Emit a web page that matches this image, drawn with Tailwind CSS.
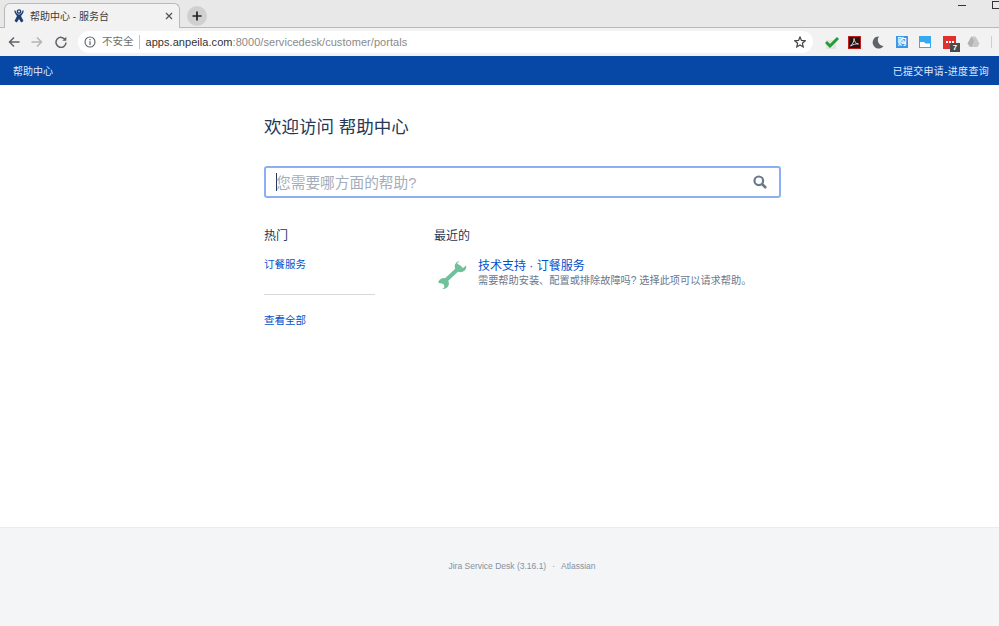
<!DOCTYPE html>
<html lang="zh-CN">
<head>
    <meta charset="UTF-8">
    <title>帮助中心 - 服务台</title>
    <script src="https://cdn.jsdelivr.net/npm/@tailwindcss/browser@4"></script>
</head>
<body class="w-[999px] h-[626px] overflow-hidden bg-white font-['Liberation_Sans','Noto_Sans_CJK_SC',sans-serif]">

    <!-- Tab strip -->
    <div class="h-[28px] bg-[#e8e8e8] border-b border-[#b9b9b9] flex items-end pl-[4px]">
        <div class="w-[176px] h-[25px] -mb-px bg-[#f2f2f2] border border-b-0 border-[#b9b9b9] rounded-t-[6px] flex items-center pl-[8px] pr-[6px]">
            <svg class="w-[12px] h-[14px] shrink-0" viewBox="0 0 12 14">
                <circle cx="6" cy="2.6" r="1.7" fill="none" stroke="#1d3f72" stroke-width="1.4"/>
                <path d="M1.2 1.5 C1.5 4 3 6 4 7 L1.5 12 L3.8 13.5 L6 10 L8.2 13.5 L10.5 12 L8 7 C9 6 10.5 4 10.8 1.5 L9.6 1.5 C9 3.5 7.5 5.5 6 5.5 C4.5 5.5 3 3.5 2.4 1.5 Z" fill="#1d3f72"/>
            </svg>
            <span class="ml-[5px] text-[10px] text-[#3c3c3c] whitespace-nowrap">帮助中心 - 服务台</span>
            <svg class="ml-auto w-[8px] h-[8px]" viewBox="0 0 8 8"><path d="M1 1 L7 7 M7 1 L1 7" stroke="#555" stroke-width="1.3"/></svg>
        </div>
        <div class="ml-[7px] mb-[1px] w-[20px] h-[20px] rounded-full bg-[#d0d0d0] flex items-center justify-center">
            <svg class="w-[10px] h-[10px]" viewBox="0 0 10 10"><path d="M5 0.5 V9.5 M0.5 5 H9.5" stroke="#222" stroke-width="1.7"/></svg>
        </div>
        <div class="ml-auto self-start flex items-start">
            <div class="w-[8px] h-px mt-[5px] bg-[#333] mr-[26px]"></div>
            <div class="w-[8px] h-[8px] mt-[1px] border border-[#333] mr-[-1px]"></div>
        </div>
    </div>

    <!-- Address bar -->
    <div class="h-[28px] bg-[#f2f2f2] flex items-center">
        <svg class="ml-[8px] w-[12px] h-[12px]" viewBox="0 0 12 12"><path d="M11.5 6 H1.5 M6 1.5 L1.5 6 L6 10.5" fill="none" stroke="#5f6368" stroke-width="1.5"/></svg>
        <svg class="ml-[11px] w-[12px] h-[12px]" viewBox="0 0 12 12"><path d="M0.5 6 H10.5 M6 1.5 L10.5 6 L6 10.5" fill="none" stroke="#b5b5b5" stroke-width="1.5"/></svg>
        <svg class="ml-[12px] w-[12px] h-[12px]" viewBox="0 0 12 12"><path d="M10.4 4 A5 5 0 1 0 11 6.5" fill="none" stroke="#5f6368" stroke-width="1.5"/><path d="M11.3 0.8 V4.8 H7.3 Z" fill="#5f6368"/></svg>
        <div class="ml-[11px] w-[735px] h-[22px] rounded-full bg-white flex items-center pl-[6px] pr-[7px]">
            <svg class="w-[12px] h-[12px] shrink-0" viewBox="0 0 12 12"><circle cx="6" cy="6" r="5" fill="none" stroke="#5f6368" stroke-width="1.1"/><path d="M6 5.2 V9 M6 3 V4.2" stroke="#5f6368" stroke-width="1.2"/></svg>
            <span class="ml-[6px] text-[10.5px] text-[#6d6d6d] whitespace-nowrap">不安全</span>
            <span class="ml-[5px] w-px h-[14px] bg-[#c4c4c4]"></span>
            <span class="ml-[6px] text-[11px] tracking-[0.05px] text-[#8a8a8a] whitespace-nowrap"><span class="text-[#333]">apps.anpeila.com</span>:8000/servicedesk/customer/portals</span>
            <svg class="ml-auto w-[12px] h-[12px] shrink-0" viewBox="0 0 12 12"><path d="M6 1 L7.5 4.4 L11.2 4.8 L8.4 7.2 L9.2 10.9 L6 9 L2.8 10.9 L3.6 7.2 L0.8 4.8 L4.5 4.4 Z" fill="none" stroke="#444" stroke-width="1.2"/></svg>
        </div>
        <!-- extension icons -->
        <div class="ml-[12px] flex items-center">
            <svg class="w-[14px] h-[14px]" viewBox="0 0 14 14"><rect x="1" y="5" width="10" height="9" fill="#e6e4da"/><path d="M1 7 L5 11 L13 3" fill="none" stroke="#1f9d3a" stroke-width="3"/></svg>
            <svg class="ml-[9px] w-[13px] h-[13px]" viewBox="0 0 13 13"><rect x="0.5" y="0.5" width="12" height="12" fill="#2a1212" stroke="#b8211c"/><path d="M2.5 10 C5 8 6.5 4 6 2.5 C6 5 8 8 10.5 8 C8 7.5 5 8.5 2.5 10 Z" fill="none" stroke="#f0e6e6" stroke-width="0.9"/></svg>
            <svg class="ml-[11px] w-[12px] h-[13px]" viewBox="0 0 12 13"><path d="M7 0.5 A6 6 0 1 0 11.5 10 A6 6 0 0 1 7 0.5 Z" fill="#5f6368"/></svg>
            <div class="ml-[12px] w-[12px] h-[12px] bg-[#3d95e6] text-white text-[9px] leading-[12px] text-center font-bold">购</div>
            <svg class="ml-[11px] w-[12px] h-[12px]" viewBox="0 0 12 12"><rect width="12" height="12" fill="#35a9f2"/><path d="M1 6 H5 L6.5 7.5 H11 V11 H1 Z" fill="#fff"/><rect x="7" y="6" width="2" height="1" fill="#35a9f2"/></svg>
            <div class="ml-[12px] relative w-[13px] h-[13px] bg-[#e0312e] flex items-center justify-center gap-px">
                <span class="w-[2px] h-[2px] bg-white"></span><span class="w-[2px] h-[2px] bg-white"></span><span class="w-[2px] h-[2px] bg-white"></span>
                <span class="absolute left-[7px] top-[7px] w-[10px] h-[9px] bg-[#4a4a4a] text-white text-[8px] leading-[9px] text-center font-bold">7</span>
            </div>
            <svg class="ml-[11px] w-[13px] h-[12px]" viewBox="0 0 13 12"><path d="M4.5 0.5 H8.5 L12.5 7.5 L10.5 11 H2.5 L0.5 7.5 Z" fill="#c8c8c8"/><path d="M4.5 0.5 L7 5 L4.5 11 L0.5 7.5 Z" fill="#b2b2b2"/></svg>
            <div class="ml-[11px] w-px h-[12px] bg-[#cfcfcf]"></div>
        </div>
    </div>

    <!-- Blue nav -->
    <nav class="h-[29px] bg-[#0747a6] flex items-center justify-between pt-[1px] pl-[13px] pr-[10px] text-[10px] text-[#deebff]">
        <span>帮助中心</span>
        <span class="tracking-[0.3px]">已提交申请-进度查询</span>
    </nav>

    <!-- Main -->
    <main class="h-[443px] bg-white border-b border-[#ebecf0] pl-[264px]">
        <h1 class="pt-[30px] text-[17.5px] leading-[24px] text-[#253858]">欢迎访问 帮助中心</h1>

        <div class="mt-[27px] w-[517px] h-[32px] border-2 border-[#8ab0f2] rounded-[3px] flex items-center pl-[10px] pr-[12px]">
            <span class="w-px h-[18px] bg-[#253858] shrink-0"></span>
            <span class="-ml-px pt-[2px] text-[14.7px] text-[#a5adba] whitespace-nowrap">您需要哪方面的帮助?</span>
            <svg class="ml-auto w-[14px] h-[14px]" viewBox="0 0 14 14"><circle cx="5.8" cy="5.8" r="4.3" fill="none" stroke="#6b778c" stroke-width="2.2"/><path d="M9 9 L13 13" stroke="#6b778c" stroke-width="2.6"/></svg>
        </div>

        <div class="mt-[29px] flex">
            <div class="w-[111px]">
                <h2 class="text-[12px] leading-[18px] text-[#253858]">热门</h2>
                <a class="block mt-[12px] text-[10.5px] leading-[14px] text-[#0052cc]">订餐服务</a>
                <div class="mt-[23px] h-px bg-[#d8d8d8]"></div>
                <a class="block mt-[18px] text-[10.5px] leading-[14px] text-[#0052cc]">查看全部</a>
            </div>
            <div class="ml-[59px]">
                <h2 class="text-[12px] leading-[18px] text-[#253858]">最近的</h2>
                <div class="mt-[13px] flex">
                    <svg class="mt-[2px] ml-[3px] w-[30px] h-[30px] shrink-0" viewBox="0 0 30 30">
                        <!-- double open-ended spanner -->
                        <g fill="#6fc09b">
                            <path d="M7 22 L22 8" stroke="#6fc09b" stroke-width="4" stroke-linecap="round"/>
                            <circle cx="23.5" cy="6.5" r="5.8"/>
                            <circle cx="6.5" cy="23.5" r="5.4"/>
                        </g>
                        <path d="M31 -1 L24.5 6.2 L20 3.5 L26 -3 Z M31 -1 L31 4 L26 8 L24.2 6.4 Z" fill="#fff"/>
                        <path d="M-2 22 L6.5 24 L7.5 27 L3 31 L-2 31 Z" fill="#fff"/>
                    </svg>
                    <div class="ml-[11px]">
                        <a class="block text-[12px] leading-[16px] text-[#0052cc]">技术支持 · 订餐服务</a>
                        <p class="text-[10.2px] leading-[14px] text-[#6b778c] whitespace-nowrap">需要帮助安装、配置或排除故障吗? 选择此项可以请求帮助。</p>
                    </div>
                </div>
            </div>
        </div>
    </main>

    <!-- Footer -->
    <footer class="h-[98px] bg-[#f4f5f7] pt-[31px] pl-[45px] flex justify-center text-[8.5px] leading-[14px] text-[#8590a2]">
        <span>Jira Service Desk (3.16.1)</span>
        <span class="mx-[6px]">·</span>
        <span>Atlassian</span>
    </footer>

</body>
</html>
